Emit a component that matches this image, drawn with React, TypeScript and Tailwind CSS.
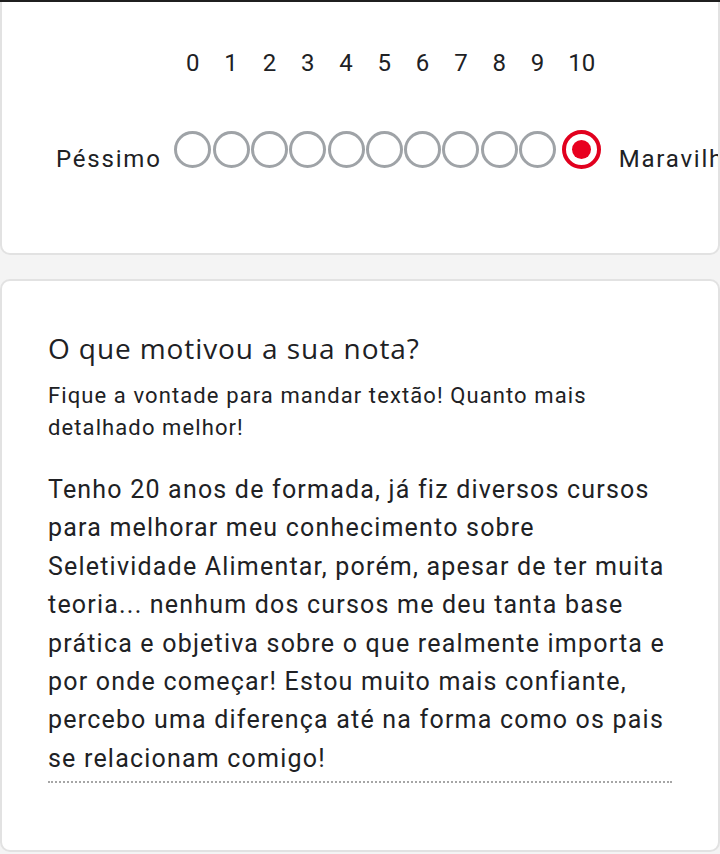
import React from 'react'

const scale = ['0', '1', '2', '3', '4', '5', '6', '7', '8', '9', '10']

const answer = [
  'Tenho 20 anos de formada, já fiz diversos cursos',
  'para melhorar meu conhecimento sobre',
  'Seletividade Alimentar, porém, apesar de ter muita',
  'teoria... nenhum dos cursos me deu tanta base',
  'prática e objetiva sobre o que realmente importa e',
  'por onde começar! Estou muito mais confiante,',
  'percebo uma diferença até na forma como os pais',
  'se relacionam comigo!',
]

const Radio: React.FC<{ checked?: boolean }> = ({ checked }) =>
  checked ? (
    <div className="w-[39px] h-[39px] rounded-full border-[4px] border-[#e1001e] flex items-center justify-center">
      <div className="w-[19px] h-[19px] rounded-full bg-[#e8001f]" />
    </div>
  ) : (
    <div className="w-[37px] h-[37px] rounded-full border-[3px] border-[#9fa3a7]" />
  )

export default function App() {
  return (
    <div className="min-h-[854px] bg-[#f4f4f4] font-['Roboto',sans-serif] text-[#202124]">
      <div className="h-[2px] bg-[#1f1f1f]" />

      {/* linear scale card */}
      <div className="bg-white border-2 border-t-0 border-[#e2e2e2] rounded-b-[10px] overflow-hidden h-[253px]">
        <div className="grid grid-cols-[auto_repeat(10,38.3px)_50px_auto] pl-[54px] pt-[47px] w-max">
          <div />
          {scale.map((n) => (
            <div key={n} className="text-center text-[24px] leading-[28px]">
              {n}
            </div>
          ))}
          <div />

          <div className="self-end -mb-[2px] pr-[12px] text-[24px] leading-[24px] tracking-[1.8px]">Péssimo</div>
          {scale.map((n) => (
            <div key={n} className="mt-[52px] h-[40px] flex items-center justify-center">
              <Radio checked={n === '10'} />
            </div>
          ))}
          <div className="self-end -mb-[2px] pl-[12px] text-[24px] leading-[24px] tracking-[1.8px] whitespace-nowrap">
            Maravilhoso
          </div>
        </div>
      </div>

      {/* paragraph question card */}
      <div className="mt-[24px] bg-white border-2 border-[#e2e2e2] rounded-[10px] h-[573px] pl-[46px] pt-[50px]">
        <div className="font-['Open_Sans',sans-serif] text-[28px] leading-[34px] tracking-[0.9px]">
          O que motivou a sua nota?
        </div>
        <div className="mt-[15px] text-[22px] leading-[32px] tracking-[1.1px]">
          <div>Fique a vontade para mandar textão! Quanto mais</div>
          <div>detalhado melhor!</div>
        </div>
        <div className="mt-[27px] w-[624px] pb-[3px] border-b-2 border-dotted border-[#a6a6a6] text-[25px] leading-[38.4px] tracking-[1.2px]">
          {answer.map((line) => (
            <div key={line} className="whitespace-nowrap">
              {line}
            </div>
          ))}
        </div>
      </div>
    </div>
  )
}
